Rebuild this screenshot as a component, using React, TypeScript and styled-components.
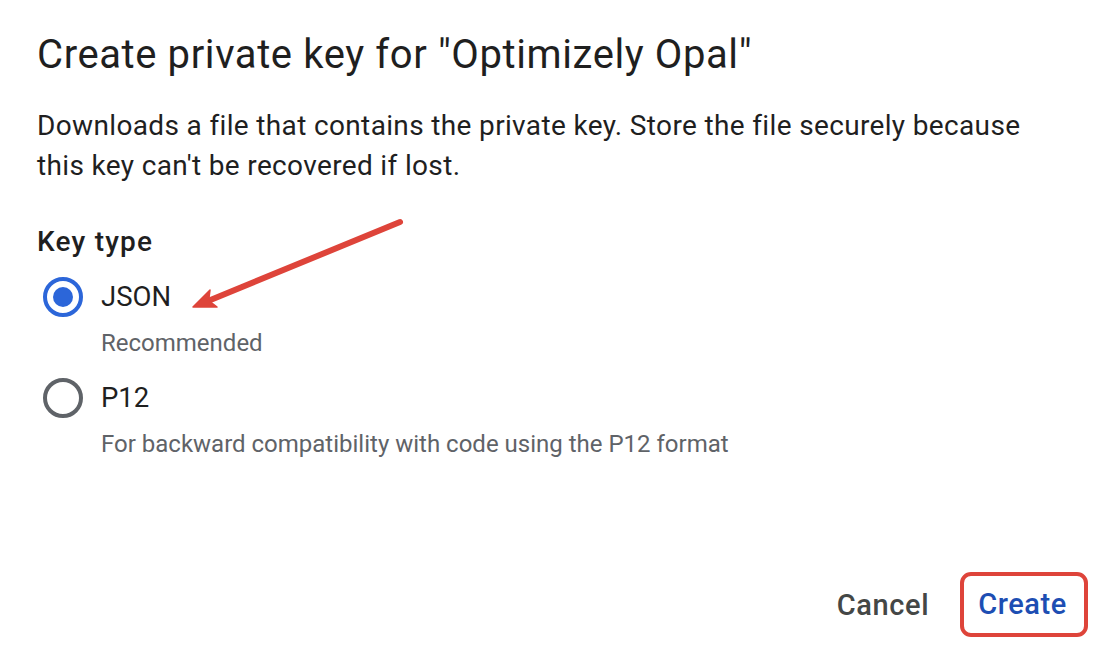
import styled, { createGlobalStyle } from "styled-components";

const enum Colors {
    Text = "#1f1f1f",
    SubText = "#5f6368",
    Blue = "#2c66d9",
    ButtonBlue = "#1d4eb3",
    ButtonGray = "#444746",
    RadioGray = "#5f6368",
    Annotation = "#de443a",
}

const GlobalStyle = createGlobalStyle`
    html, body {
        margin: 0;
        padding: 0;
        background: #ffffff;
    }
    body {
        font-family: Roboto, "Liberation Sans", sans-serif;
        color: ${Colors.Text};
    }
`;

type KeyOption = {
    label: string;
    hint: string;
    checked: boolean;
};

const options: KeyOption[] = [
    { label: "JSON", hint: "Recommended", checked: true },
    { label: "P12", hint: "For backward compatibility with code using the P12 format", checked: false },
];

const App = () => {
    return (
        <>
            <GlobalStyle />
            <Dialog>
                <Title>Create private key for "Optimizely Opal"</Title>
                <Description>
                    Downloads a file that contains the private key. Store the file securely because
                    this key can't be recovered if lost.
                </Description>
                <FieldLabel>Key type</FieldLabel>
                <OptionList>
                    {options.map((opt) => (
                        <Option key={opt.label}>
                            <OptionRow>
                                <Radio checked={opt.checked} />
                                <OptionLabel>{opt.label}</OptionLabel>
                            </OptionRow>
                            <OptionHint>{opt.hint}</OptionHint>
                        </Option>
                    ))}
                </OptionList>
                <Actions>
                    <TextButton color={Colors.ButtonGray}>Cancel</TextButton>
                    <Highlight>
                        <TextButton color={Colors.ButtonBlue}>Create</TextButton>
                    </Highlight>
                </Actions>
                {/* red annotation arrow pointing at the JSON option */}
                <Arrow width="240" height="120" viewBox="0 0 240 120">
                    <line x1="220" y1="22" x2="28" y2="101" stroke={Colors.Annotation} strokeWidth="6" strokeLinecap="round" />
                    <path d="M13 107 L30 90 L28.7 100.5 L37 107 Z" fill={Colors.Annotation} stroke={Colors.Annotation} strokeWidth="1.5" strokeLinejoin="round" />
                </Arrow>
            </Dialog>
        </>
    );
};

export default App;

const Dialog = styled.div`
    position: relative;
    width: 1096px;
    height: 646px;
    box-sizing: border-box;
    padding: 31px 8px 9px 37px;
    display: flex;
    flex-direction: column;
`;

const Title = styled.h1`
    margin: 0;
    font-size: 40px;
    font-weight: 400;
    line-height: 48px;
    letter-spacing: 0.6px;
`;

const Description = styled.p`
    margin: 27px 0 0;
    max-width: 1000px;
    font-size: 28px;
    line-height: 40px;
    letter-spacing: 0.35px;
`;

const FieldLabel = styled.div`
    margin-top: 38px;
    font-size: 28px;
    font-weight: 500;
    line-height: 36px;
    letter-spacing: 1.2px;
`;

const OptionList = styled.div`
    display: flex;
    flex-direction: column;
    gap: 16px;
    margin-top: 14px;
`;

const Option = styled.div`
    display: flex;
    flex-direction: column;
`;

const OptionRow = styled.div`
    display: flex;
    align-items: center;
    gap: 18px;
    height: 46px;
    margin-left: 6px;
`;

const Radio = styled.span<{ checked: boolean }>`
    width: 40px;
    height: 40px;
    box-sizing: border-box;
    border-radius: 50%;
    border: 4px solid ${(p) => (p.checked ? Colors.Blue : Colors.RadioGray)};
    display: flex;
    align-items: center;
    justify-content: center;

    &::after {
        content: "";
        width: 20px;
        height: 20px;
        border-radius: 50%;
        background: ${Colors.Blue};
        display: ${(p) => (p.checked ? "block" : "none")};
    }
`;

const OptionLabel = styled.span`
    font-size: 27.5px;
    line-height: 36px;
`;

const OptionHint = styled.div`
    margin-left: 64px;
    margin-top: 7px;
    font-size: 24px;
    line-height: 32px;
    color: ${Colors.SubText};
`;

const Actions = styled.div`
    margin-top: auto;
    display: flex;
    justify-content: flex-end;
    align-items: center;
    gap: 31px;
`;

const Highlight = styled.div`
    border: 4px solid ${Colors.Annotation};
    border-radius: 11px;
    padding: 10px 17px 11px 14px;
`;

const TextButton = styled.button<{ color: string }>`
    border: none;
    background: none;
    padding: 0;
    font-family: Roboto, "Liberation Sans", sans-serif;
    font-size: 29px;
    font-weight: 500;
    line-height: 36px;
    letter-spacing: 0.6px;
    color: ${(p) => p.color};
`;

const Arrow = styled.svg`
    position: absolute;
    left: 180px;
    top: 200px;
`;
